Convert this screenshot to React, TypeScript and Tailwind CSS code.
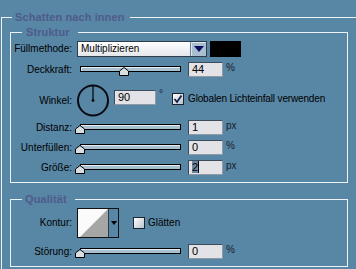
import type { ReactNode } from "react";

const font = "font-['Liberation_Sans',Arial,sans-serif]";

function Thumb({ left }: { left: number }) {
  return (
    <svg
      className="absolute top-[5px]"
      style={{ left: `${left}px` }}
      width="10"
      height="9"
      viewBox="0 0 10 9"
    >
      <polygon
        points="0.5,8.5 0.5,4 5,0.5 9.5,4 9.5,8.5"
        fill="#d9dee3"
        stroke="#000"
        strokeWidth="1"
      />
    </svg>
  );
}

function Slider({ value }: { value: number }) {
  // track spans 101px, thumb centred on the value
  const left = 3 + (value / 100) * 101 - 5;
  return (
    <div className="relative w-[111px] h-[15px] shrink-0">
      <div className="ml-[3px] mt-[4px] w-[101px] h-[6px] border border-black bg-[#a9c0d0] shadow-[inset_1px_1px_0_#e6eef3]" />
      <Thumb left={left} />
    </div>
  );
}

function NumField({ children, w = "w-[35px]" }: { children: ReactNode; w?: string }) {
  return (
    <div
      className={`${w} h-[15px] shrink-0 bg-[#e3e3e7] border border-[#3c4c5c] border-b-[#8e9aa6] border-r-[#8e9aa6] pl-[3px] text-[11px] leading-[13px] text-black`}
    >
      {children}
    </div>
  );
}

function Label({ children, className = "" }: { children: ReactNode; className?: string }) {
  return (
    <div className={`w-[61px] shrink-0 text-right text-[10px] leading-[12px] text-black ${className}`}>
      {children}
    </div>
  );
}

function Unit({ children }: { children: ReactNode }) {
  return <div className="ml-[3px] text-[10px] leading-[12px] text-[#1a1a2a] -mt-[3px]">{children}</div>;
}

function SliderRow({ label, value, field, unit }: { label: string; value: number; field: ReactNode; unit: string }) {
  return (
    <div className="flex items-center h-[15px]">
      <Label>{label}</Label>
      <div className="ml-[5px] flex items-center">
        <Slider value={value} />
        {field}
        <Unit>{unit}</Unit>
      </div>
    </div>
  );
}

function CheckBox({ checked }: { checked?: boolean }) {
  return (
    <div className="w-[12px] h-[12px] shrink-0 border border-[#1c2433] bg-gradient-to-br from-white to-[#b9c3cc] flex items-center justify-center">
      {checked && (
        <svg width="10" height="10" viewBox="0 0 10 10">
          <path d="M1.5 5 L4 8 L8.5 1.5" fill="none" stroke="#14204a" strokeWidth="1.8" />
        </svg>
      )}
    </div>
  );
}

function Dial() {
  return (
    <svg width="34" height="33" viewBox="0 0 34 33" className="shrink-0">
      <circle cx="17" cy="16.5" r="15" fill="none" stroke="#0a0a14" strokeWidth="2" />
      <line x1="17" y1="16.5" x2="17" y2="2" stroke="#0a0a14" strokeWidth="1.3" />
      <circle cx="17" cy="16.5" r="1.4" fill="#0a0a14" />
    </svg>
  );
}

export default function App() {
  return (
    <div className={`w-[356px] h-[269px] overflow-hidden bg-[#5886a5] pl-[1px] pt-[11px] ${font}`}>
      <fieldset className="min-h-[262px] border-l border-t border-[#edf2f6] pt-0">
        <legend className="ml-[10px] pl-[3px] pr-[6px] text-[11px] leading-[12px] font-bold text-[#4f5b8a] tracking-[0.1px]">
          Schatten nach innen
        </legend>

        <fieldset className="ml-[8px] mt-[3px] w-[338px] border border-[#edf2f6] pt-[3px] pb-[7px]">
          <legend className="ml-[11px] pl-[4px] pr-[8px] text-[11px] leading-[12px] font-bold text-[#4f5b8a] tracking-[0.1px]">
            Struktur
          </legend>

          <div className="flex items-center h-[16px]">
            <Label>Füllmethode:</Label>
            <div className="ml-[5px] flex items-center">
              <div className="flex h-[16px] w-[130px] border border-[#2e3c4a]">
                <div className="flex-1 bg-gradient-to-b from-white to-[#e4e6ea] pl-[3px] text-[10px] leading-[14px] text-black">
                  Multiplizieren
                </div>
                <div className="w-[16px] bg-[#a9bfcf] border-l border-[#6c8296] shadow-[inset_1px_1px_0_#dde7ee] flex items-center justify-center">
                  <svg width="10" height="6" viewBox="0 0 10 6">
                    <polygon points="0,0 10,0 5,6" fill="#0c0c5e" />
                  </svg>
                </div>
              </div>
              <div className="ml-[3px] w-[31px] h-[16px] bg-black" />
            </div>
          </div>

          <div className="mt-[5px]">
            <SliderRow label="Deckkraft:" value={44} field={<NumField>44</NumField>} unit="%" />
          </div>

          <div className="mt-[7px] flex items-start h-[32px]">
            <Label className="mt-[11px]">Winkel:</Label>
            <div className="ml-[4px] flex items-start">
              <Dial />
              <div className="mt-[6px] ml-[4px]">
                <NumField w="w-[42px]">90</NumField>
              </div>
              <div className="mt-[5px] ml-[3px] text-[10px] leading-[10px] text-[#1a1a2a]">°</div>
              <div className="mt-[9px] ml-[9px] flex items-center">
                <CheckBox checked />
                <span className="ml-[4px] text-[10px] leading-[12px] text-black tracking-[-0.15px]">
                  Globalen Lichteinfall verwenden
                </span>
              </div>
            </div>
          </div>

          <div className="mt-[4px]">
            <SliderRow label="Distanz:" value={0} field={<NumField>1</NumField>} unit="px" />
          </div>
          <div className="mt-[5px]">
            <SliderRow label="Unterfüllen:" value={0} field={<NumField>0</NumField>} unit="%" />
          </div>
          <div className="mt-[5px]">
            <SliderRow
              label="Größe:"
              value={0}
              field={
                <NumField>
                  <span className="bg-[#6e88a4] border-r border-black">2</span>
                </NumField>
              }
              unit="px"
            />
          </div>
        </fieldset>

        <fieldset className="ml-[8px] mt-[10px] w-[338px] border border-[#edf2f6] pt-[3px] pb-[7px]">
          <legend className="ml-[11px] pl-[3px] pr-[8px] text-[11px] leading-[12px] font-bold text-[#4f5b8a] tracking-[0.1px]">
            Qualität
          </legend>

          <div className="flex items-center h-[30px]">
            <Label>Kontur:</Label>
            <div className="ml-[5px] flex items-center">
              <div className="flex h-[30px] w-[42px] border border-[#111]">
                <svg width="30" height="28" viewBox="0 0 30 28" className="shrink-0">
                  <rect x="0" y="0" width="30" height="28" fill="#fbfbfb" />
                  <polygon points="2,28 30,0 30,28" fill="#a6a6a6" />
                </svg>
                <div className="flex-1 border-l border-[#2a3a4a] flex items-start justify-center pt-[12px]">
                  <svg width="6" height="4" viewBox="0 0 6 4">
                    <polygon points="0,0 6,0 3,4" fill="#000" />
                  </svg>
                </div>
              </div>
              <div className="ml-[14px] flex items-center">
                <CheckBox />
                <span className="ml-[3px] text-[10px] leading-[12px] text-black">Glätten</span>
              </div>
            </div>
          </div>

          <div className="mt-[6px]">
            <SliderRow label="Störung:" value={0} field={<NumField>0</NumField>} unit="%" />
          </div>
        </fieldset>
      </fieldset>
    </div>
  );
}
